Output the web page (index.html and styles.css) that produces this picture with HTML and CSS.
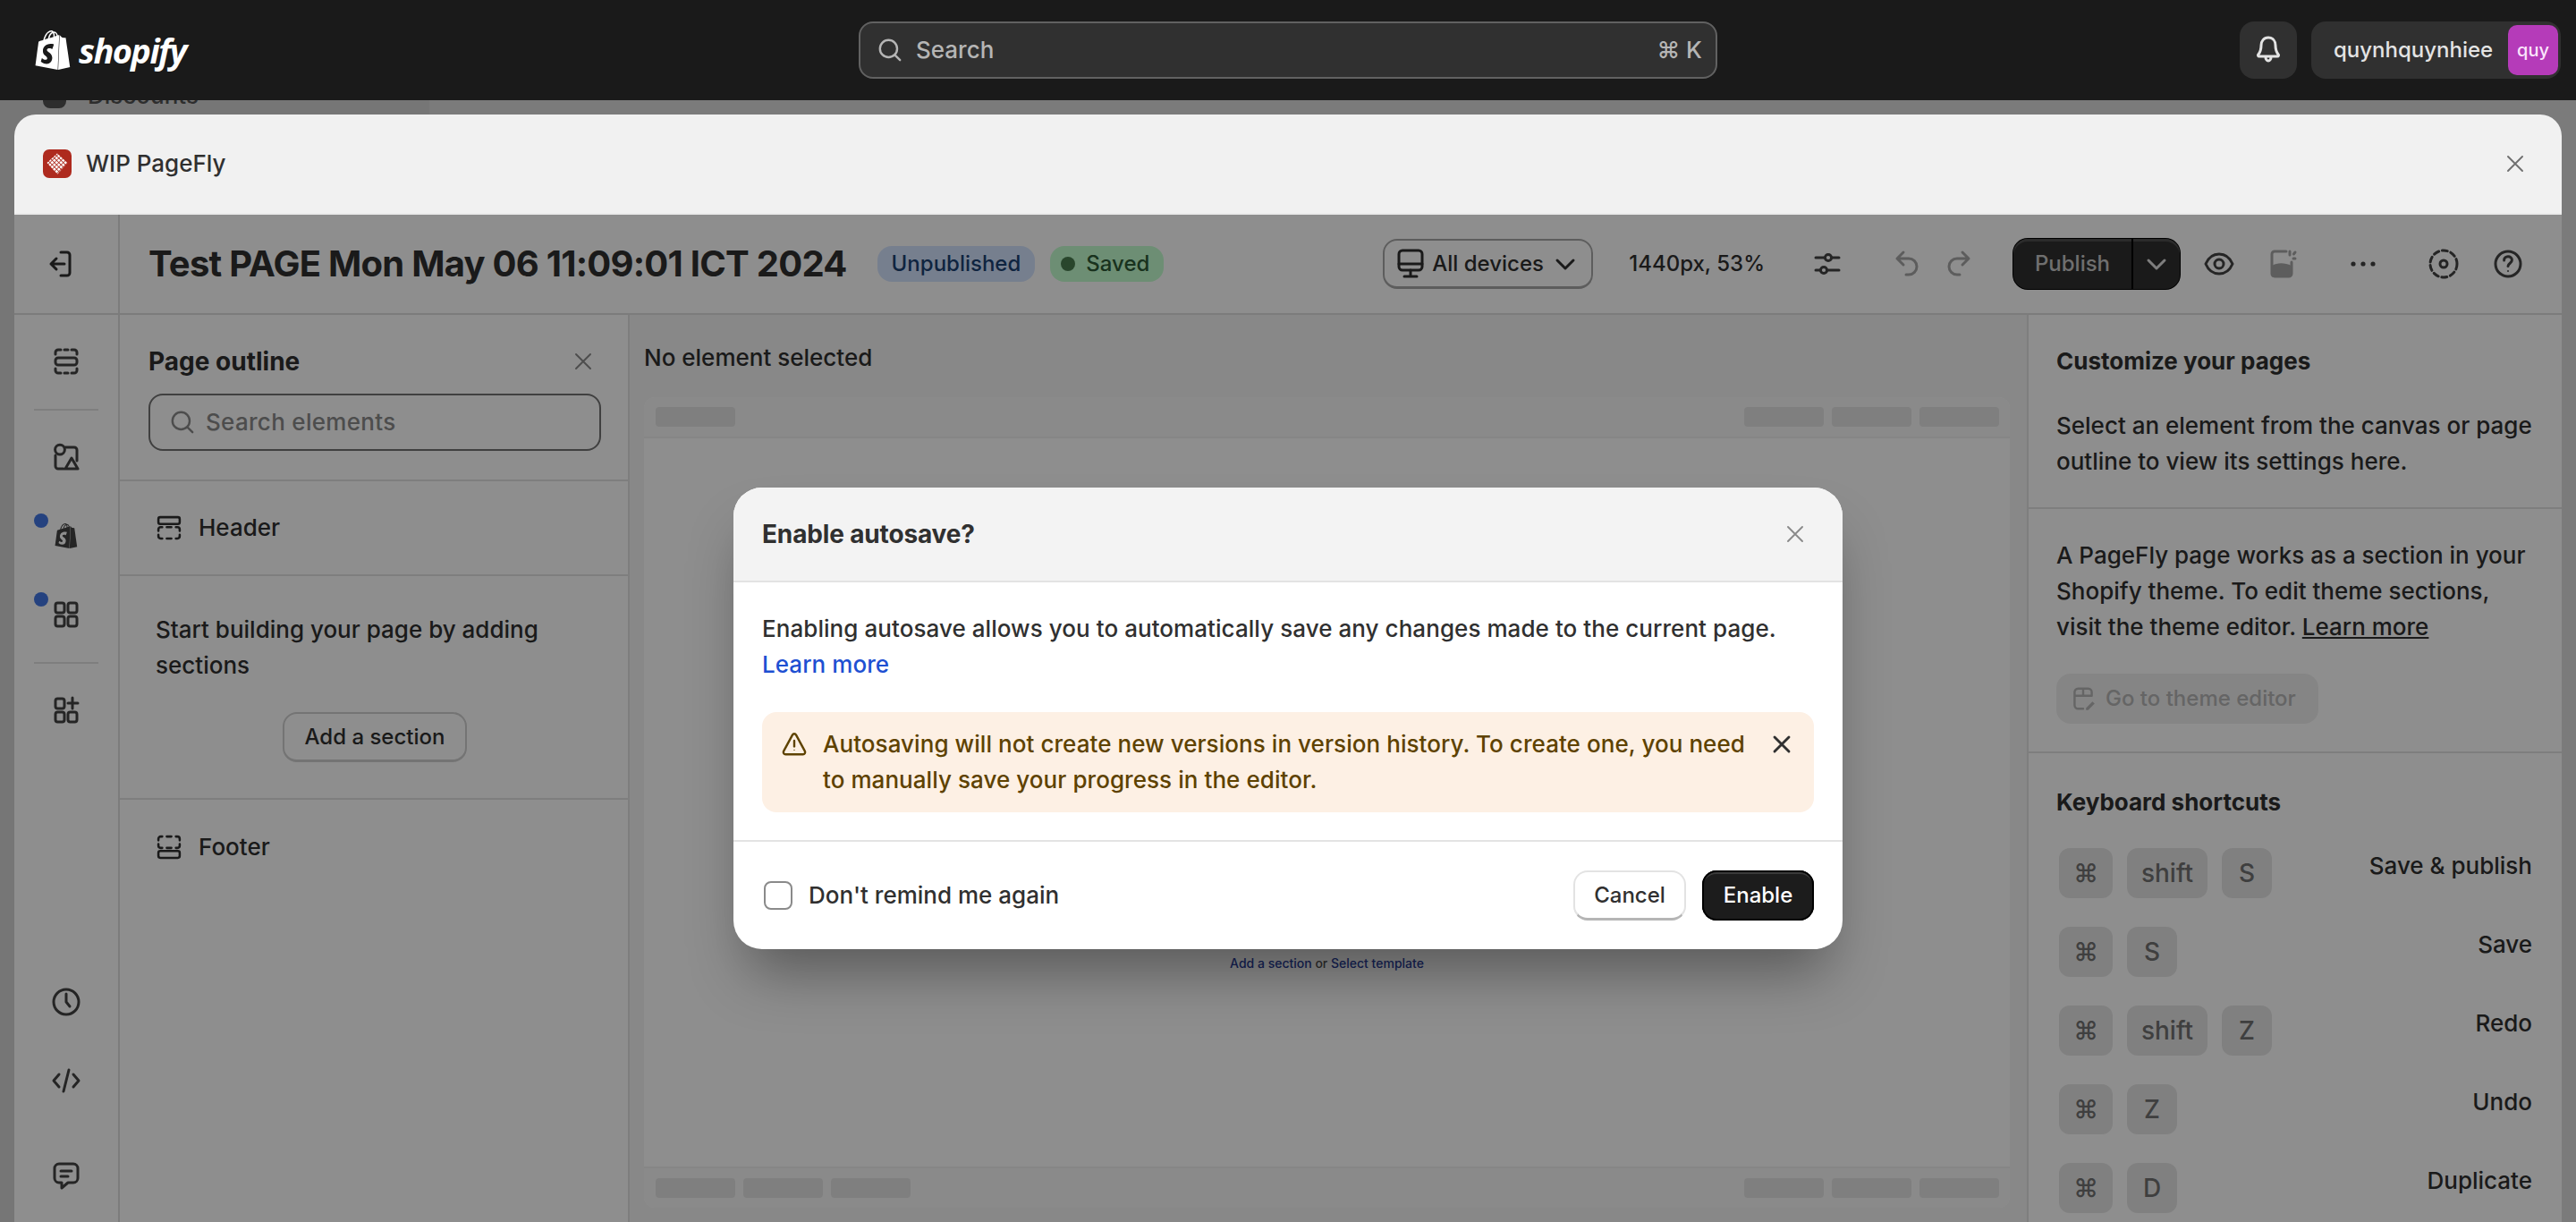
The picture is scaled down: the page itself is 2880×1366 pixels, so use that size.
FILE: index.html
```html
<!DOCTYPE html>
<html lang="en">
<head>
    <meta charset="UTF-8">
    <title>WIP PageFly</title>
    <link rel="stylesheet" href="styles.css">
</head>
<body>
    <svg class="sprite" aria-hidden="true">
        <symbol id="bag" viewBox="0 0 24 24"><path d="M15.337 23.979l7.216-1.561s-2.604-17.613-2.625-17.73c-.018-.116-.114-.192-.211-.192s-1.929-.136-1.929-.136-1.275-1.274-1.439-1.411c-.045-.037-.075-.057-.121-.074l-.914 21.104h.023zM11.71 11.305s-.81-.424-1.774-.424c-1.447 0-1.504.906-1.504 1.141 0 1.232 3.24 1.715 3.24 4.629 0 2.295-1.44 3.76-3.406 3.76-2.354 0-3.54-1.465-3.54-1.465l.646-2.086s1.245 1.066 2.28 1.066c.675 0 .975-.545.975-.932 0-1.619-2.654-1.694-2.654-4.359-.034-2.237 1.571-4.416 4.827-4.416 1.257 0 1.875.361 1.875.361l-.945 2.715-.02.01zM11.17.83c.136 0 .271.038.405.135-.984.465-2.064 1.639-2.508 3.992-.656.213-1.293.405-1.889.578C7.697 3.75 8.951.84 11.17.84V.83zm1.235 2.949v.135c-.754.232-1.583.484-2.394.736.466-1.777 1.333-2.645 2.085-2.971.193.501.309 1.176.309 2.1zm.539-2.234c.694.074 1.141.867 1.429 1.755-.349.114-.735.231-1.158.366v-.252c0-.752-.096-1.371-.271-1.871v.002zm2.992 1.289c-.02 0-.06.021-.078.021s-.289.075-.714.21c-.423-1.233-1.175-2.37-2.508-2.37h-.115C12.135.209 11.669 0 11.265 0 8.159 0 6.675 3.877 6.21 5.846c-1.194.365-2.063.636-2.16.674-.675.213-.694.232-.772.87-.075.462-1.83 14.063-1.83 14.063L15.009 24l.927-21.166z"/></symbol>
        <symbol id="close" viewBox="0 0 20 20"><path d="M5 5l10 10M15 5L5 15"/></symbol>
        <symbol id="magnifier" viewBox="0 0 20 20"><circle cx="9" cy="9" r="6"/><path d="M13.5 13.5L17 17"/></symbol>
        <symbol id="chevron" viewBox="0 0 20 20"><path d="M5.5 8l4.5 4.5L14.5 8"/></symbol>
    </svg>

    <div class="admin-behind">
        <nav class="admin-nav">
            <span class="admin-nav-icon"></span>
            <span>Discounts</span>
        </nav>
    </div>

    <header class="topbar">
        <a class="logo">
            <svg class="logo-bag"><use href="#bag"/></svg>
            <span class="logo-word">shopify</span>
        </a>
        <div class="global-search">
            <svg class="icon-32"><use href="#magnifier"/></svg>
            <span class="global-search-text">Search</span>
            <span class="global-search-keys">⌘ K</span>
        </div>
        <div class="topbar-right">
            <button class="bell-btn">
                <svg class="icon-40" viewBox="0 0 20 20"><path d="M10 3c-2.600 0-4 2-4 4.400 0 2.600-.4 3.600-1.600 5.100-.3.4-.1 1 .5 1h10.200c.6 0 .8-.6.5-1-1.200-1.500-1.600-2.500-1.600-5.100C14 5 12.600 3 10 3zM8.500 14c0 1 .6 2 1.500 2s1.500-1 1.500-2"/></svg>
            </button>
            <div class="account">
                <span class="account-name">quynhquynhiee</span>
                <span class="account-avatar">quy</span>
            </div>
        </div>
    </header>

    <main class="app-modal">
        <div class="app-title-bar">
            <svg class="app-logo" viewBox="0 0 32 32">
                <rect width="32" height="32" rx="7" fill="#ae2a1e"/>
                <defs>
                    <pattern id="pf-dots" width="3.500" height="3.500" patternUnits="userSpaceOnUse" patternTransform="rotate(45 16 15)">
                        <rect width="2.700" height="2.700" fill="#fff"/>
                    </pattern>
                </defs>
                <path d="M16 4.500l11.500 10.500L16 28 4.500 15z" fill="url(#pf-dots)"/>
            </svg>
            <span class="app-title">WIP PageFly</span>
            <svg class="close-icon app-close"><use href="#close"/></svg>
        </div>

        <div class="app-body">
            <div class="toolbar">
                <div class="toolbar-exit">
                    <svg class="icon-40" viewBox="0 0 20 20"><path d="M10 3.500h3.500a1.500 1.500 0 0 1 1.500 1.500v10a1.500 1.500 0 0 1-1.500 1.500H10M12 10H4.500M7.500 7l-3 3 3 3"/></svg>
                </div>
                <h1 class="page-name">Test PAGE Mon May 06 11:09:01 ICT 2024</h1>
                <span class="badge badge-info">Unpublished</span>
                <span class="badge badge-success"><i class="badge-dot"></i>Saved</span>

                <div class="tool-group tool-group-devices">
                    <button class="devices-btn">
                        <svg class="icon-40" viewBox="0 0 20 20"><rect x="3.500" y="2.500" width="13" height="11" rx="2"/><path d="M3.500 10h13M10 13.500v3M6.500 17h7"/></svg>
                        <span>All devices</span>
                        <svg class="icon-40"><use href="#chevron"/></svg>
                    </button>
                    <span class="viewport-size">1440px, 53%</span>
                </div>
                <div class="tool-group tool-group-50">
                    <svg class="icon-40" viewBox="0 0 20 20"><circle cx="10.500" cy="6.500" r="1.800"/><circle cx="8" cy="13.500" r="1.800"/><path d="M3.500 6.500h5M12.500 6.500h4M3.500 13.500h2.500M10 13.500h6.500"/></svg>
                </div>
                <div class="tool-group tool-group-50 tool-group-undo">
                    <svg class="icon-40 icon-muted" viewBox="0 0 20 20"><path d="M7.500 3.500L4 7l3.500 3.500M4 7h6.500a4.500 4.500 0 0 1 0 9H9"/></svg>
                    <svg class="icon-40 icon-muted" viewBox="0 0 20 20"><path d="M12.500 3.500L16 7l-3.500 3.500M16 7H9.500a4.500 4.500 0 0 0 0 9H11"/></svg>
                </div>
                <div class="publish-group">
                    <button class="publish-btn">Publish</button>
                    <button class="publish-more"><svg class="icon-40"><use href="#chevron"/></svg></button>
                </div>
                <div class="tool-group tool-group-eye">
                    <svg class="icon-40" viewBox="0 0 20 20"><path d="M2.500 10C4 6.500 6.800 4.500 10 4.500s6 2 7.500 5.500c-1.500 3.500-4.300 5.500-7.500 5.500S4 13.500 2.500 10z"/><circle cx="10" cy="10" r="2.500"/></svg>
                    <svg class="icon-40 icon-muted" viewBox="0 0 20 20"><path d="M12 3H5.500A1.500 1.500 0 0 0 4 4.500v11A1.500 1.500 0 0 0 5.500 17h8a1.500 1.500 0 0 0 1.500-1.500V9"/><path class="fill" d="M4 11c3-1.800 7-1.800 11 0v4.500a1.500 1.500 0 0 1-1.500 1.500h-8A1.500 1.500 0 0 1 4 15.500z"/><path d="M14 3v2M17 3.500l-.8 1M17 7h-1"/></svg>
                </div>
                <div class="tool-group tool-group-50">
                    <svg class="icon-40" viewBox="0 0 20 20"><circle class="fill" cx="4.500" cy="10" r="1.300"/><circle class="fill" cx="10" cy="10" r="1.300"/><circle class="fill" cx="15.500" cy="10" r="1.300"/></svg>
                </div>
                <div class="tool-group tool-group-50 tool-group-help">
                    <svg class="icon-40" viewBox="0 0 20 20"><circle cx="10" cy="10" r="7.500" stroke-dasharray="3 1.900"/><circle cx="10" cy="10" r="2"/></svg>
                    <svg class="icon-40" viewBox="0 0 20 20"><circle cx="10" cy="10" r="7"/><path d="M7.800 8c0-1.300 1-2.100 2.200-2.100s2.200.8 2.200 2c0 1.700-2.200 1.700-2.200 3.400"/><circle class="fill" cx="10" cy="14" r=".5"/></svg>
                </div>
            </div>

            <div class="workspace">
                <aside class="rail">
                    <svg class="icon-40" viewBox="0 0 20 20"><path d="M4 6V5a1.500 1.500 0 0 1 1.500-1.500H7M9 3.500h2M13 3.500h1.500A1.500 1.500 0 0 1 16 5v1M4 14v1a1.500 1.500 0 0 0 1.500 1.500H7M9 16.500h2M13 16.500h1.500A1.500 1.500 0 0 0 16 15v-1"/><rect x="4" y="8" width="12" height="4" rx="1.500"/></svg>
                    <div class="rail-line"></div>
                    <svg class="icon-40" viewBox="0 0 20 20"><circle cx="6.500" cy="5.800" r="2.700"/><path d="M9.500 4.500h5A1.500 1.500 0 0 1 16 6v6M4 9v6a1.500 1.500 0 0 0 1.500 1.500h3M9.500 16.500l3.500-6 3.500 6z"/></svg>
                    <div class="rail-item rail-item-dot">
                        <svg class="rail-bag"><use href="#bag"/></svg>
                    </div>
                    <div class="rail-item rail-item-dot">
                        <svg class="icon-40" viewBox="0 0 20 20"><rect x="4" y="3.500" width="5" height="5.500" rx="1.200"/><rect x="11" y="3.500" width="5" height="5.500" rx="1.200"/><rect x="4" y="11" width="5" height="5.500" rx="1.200"/><rect x="11" y="11" width="5" height="5.500" rx="1.200"/></svg>
                    </div>
                    <div class="rail-line"></div>
                    <svg class="icon-40" viewBox="0 0 20 20"><rect x="4" y="3.500" width="5" height="5.500" rx="1.200"/><path d="M13.500 3v6M11 6h5.500"/><rect x="4" y="11" width="5" height="5.500" rx="1.200"/><rect x="11" y="11" width="5" height="5.500" rx="1.200"/></svg>
                    <div class="rail-bottom">
                        <svg class="icon-40" viewBox="0 0 20 20"><circle cx="10" cy="10" r="7"/><path d="M10 5.500V10l2 2.500"/></svg>
                        <svg class="icon-40" viewBox="0 0 20 20"><path d="M6 6.500L3 10l3 3.500M14 6.500l3 3.500-3 3.500M11.500 4l-3 12"/></svg>
                        <svg class="icon-40" viewBox="0 0 20 20"><path d="M6 3.500h8A2.500 2.500 0 0 1 16.500 6v5.500A2.500 2.500 0 0 1 14 14h-3l-3.500 3v-3H6a2.500 2.500 0 0 1-2.500-2.500V6A2.500 2.500 0 0 1 6 3.500z"/><path d="M7 7.500h6M7 10.500h4"/></svg>
                    </div>
                </aside>

                <section class="outline">
                    <div class="outline-head">
                        <div class="outline-title-row">
                            <h2 class="panel-title">Page outline</h2>
                            <svg class="close-icon icon-grey"><use href="#close"/></svg>
                        </div>
                        <div class="outline-search">
                            <svg class="icon-32 icon-grey"><use href="#magnifier"/></svg>
                            <span>Search elements</span>
                        </div>
                    </div>
                    <div class="outline-row">
                        <svg class="icon-34" viewBox="0 0 20 20"><rect x="3" y="3" width="14" height="4.500" rx="1.200"/><path d="M3 12v-1a1.500 1.500 0 0 1 1.500-1.500h1M8.500 9.500h3M14.500 9.500h1A1.500 1.500 0 0 1 17 11v1M3 14.500v1A1.500 1.500 0 0 0 4.500 17h1M8.500 17h3M14.500 17h1a1.500 1.500 0 0 0 1.500-1.500v-1"/></svg>
                        <span>Header</span>
                    </div>
                    <div class="outline-empty">
                        <p>Start building your page by adding sections</p>
                        <button class="add-section-btn">Add a section</button>
                    </div>
                    <div class="outline-row">
                        <svg class="icon-34" viewBox="0 0 20 20"><rect x="3" y="12.500" width="14" height="4.500" rx="1.200"/><path d="M3 8v1a1.500 1.500 0 0 0 1.500 1.500h1M8.500 10.500h3M14.500 10.500h1A1.500 1.500 0 0 0 17 9V8M3 5.500v-1A1.500 1.500 0 0 1 4.500 3h1M8.500 3h3M14.500 3h1A1.500 1.500 0 0 1 17 4.500v1"/></svg>
                        <span>Footer</span>
                    </div>
                </section>

                <section class="canvas">
                    <div class="canvas-status">No element selected</div>
                    <div class="frame">
                        <div class="frame-bar frame-bar-top">
                            <div class="skeletons"><i></i></div>
                            <div class="skeletons"><i></i><i></i><i></i></div>
                        </div>
                        <div class="frame-page">
                            <p class="frame-hint"><a>Add a section</a> or <a>Select template</a></p>
                        </div>
                        <div class="frame-bar frame-bar-bottom">
                            <div class="skeletons"><i></i><i></i><i></i></div>
                            <div class="skeletons"><i></i><i></i><i></i></div>
                        </div>
                    </div>
                </section>

                <aside class="inspector">
                    <div class="inspector-block inspector-intro">
                        <h3 class="block-title">Customize your pages</h3>
                        <p>Select an element from the canvas or page outline to view its settings here.</p>
                    </div>
                    <div class="inspector-block inspector-theme">
                        <p>A PageFly page works as a section in your Shopify theme. To edit theme sections, visit the theme editor. <u>Learn more</u></p>
                        <button class="theme-btn">
                            <svg class="icon-32" viewBox="0 0 20 20"><path d="M16 8V5.500A2.500 2.500 0 0 0 13.500 3h-7A2.500 2.500 0 0 0 4 5.500v9A2.500 2.500 0 0 0 6.500 17H10M4 8h12M10 3v5"/><path class="fill" d="M12 16.500l4.500-4.500 1.500 1.500-4.500 4.500H12z"/></svg>
                            <span>Go to theme editor</span>
                        </button>
                    </div>
                    <div class="inspector-block inspector-shortcuts">
                        <h3 class="block-title shortcuts-title">Keyboard shortcuts</h3>
                        <div class="shortcut">
                            <div class="keys"><kbd class="key-cmd">⌘</kbd><kbd class="key-shift">shift</kbd><kbd>S</kbd></div>
                            <span class="shortcut-name">Save &amp; publish</span>
                        </div>
                        <div class="shortcut">
                            <div class="keys"><kbd class="key-cmd">⌘</kbd><kbd>S</kbd></div>
                            <span class="shortcut-name">Save</span>
                        </div>
                        <div class="shortcut">
                            <div class="keys"><kbd class="key-cmd">⌘</kbd><kbd class="key-shift">shift</kbd><kbd>Z</kbd></div>
                            <span class="shortcut-name">Redo</span>
                        </div>
                        <div class="shortcut">
                            <div class="keys"><kbd class="key-cmd">⌘</kbd><kbd>Z</kbd></div>
                            <span class="shortcut-name">Undo</span>
                        </div>
                        <div class="shortcut">
                            <div class="keys"><kbd class="key-cmd">⌘</kbd><kbd>D</kbd></div>
                            <span class="shortcut-name">Duplicate</span>
                        </div>
                    </div>
                </aside>
            </div>

            <div class="scrim">
                <div class="dialog">
                    <div class="dialog-head">
                        <h2 class="dialog-title">Enable autosave?</h2>
                        <svg class="close-icon icon-grey"><use href="#close"/></svg>
                    </div>
                    <div class="dialog-body">
                        <p>Enabling autosave allows you to automatically save any changes made to the current page. <a class="link">Learn more</a></p>
                        <div class="warning">
                            <svg class="warning-icon" viewBox="0 0 20 20"><path d="M8.700 3.500L2.600 14.800c-.6 1 .2 2.200 1.300 2.200h12.200c1.100 0 1.900-1.200 1.300-2.200L11.300 3.500c-.6-1.100-2-1.100-2.600 0z"/><path d="M10 7.500v4"/><circle class="fill" cx="10" cy="14" r=".4"/></svg>
                            <p>Autosaving will not create new versions in version history. To create one, you need to manually save your progress in the editor.</p>
                            <svg class="warning-close"><use href="#close"/></svg>
                        </div>
                    </div>
                    <div class="dialog-foot">
                        <label class="remind">
                            <span class="checkbox"></span>
                            <span>Don't remind me again</span>
                        </label>
                        <div class="dialog-actions">
                            <button class="btn-cancel">Cancel</button>
                            <button class="btn-enable">Enable</button>
                        </div>
                    </div>
                </div>
            </div>
        </div>
    </main>
</body>
</html>
```

FILE: styles.css
```css
* {
    box-sizing: border-box;
}

html, body {
    height: 100%;
}

body {
    margin: 0;
    position: relative;
    overflow: hidden;
    background: #7b7b7b;
    color: #303030;
    font-family: Inter, "DejaVu Sans", sans-serif;
    font-size: 26px;
    line-height: 40px;
    font-weight: 450;
}

h1, h2, h3, p {
    margin: 0;
}

button {
    font: inherit;
    color: inherit;
    padding: 0;
    border: none;
    background: none;
}

svg {
    flex: none;
    display: block;
    fill: none;
    stroke: currentColor;
    stroke-width: 1.5;
    stroke-linecap: round;
    stroke-linejoin: round;
}

svg .fill {
    fill: currentColor;
    stroke: none;
}

.sprite {
    display: none;
}

.icon-32 { width: 32px; height: 32px; }
.icon-34 { width: 34px; height: 34px; }
.icon-40 { width: 40px; height: 40px; color: #444; }
.icon-muted { color: #a8a8a8; }
.icon-grey { color: #8a8a8a; }

.close-icon {
    width: 32px;
    height: 32px;
    stroke-width: 1.2;
}

/* admin page behind the app modal */
.admin-behind {
    position: absolute;
    inset: 0;
}

.admin-nav {
    width: 480px;
    height: 100%;
    padding: 87px 0 0 48px;
    display: flex;
    gap: 24px;
    background: #767676;
    color: #2e2e2e;
}

.admin-nav-icon {
    width: 26px;
    height: 34px;
    border-radius: 8px;
    background: #2e2e2e;
}

/* top bar */
.topbar {
    position: relative;
    height: 112px;
    padding: 0 17px;
    display: grid;
    grid-template-columns: 1fr 960px 1fr;
    align-items: center;
    background: #1a1a1a;
    color: #e3e3e3;
}

.logo {
    margin-left: 20px;
    display: flex;
    align-items: center;
    gap: 7px;
    color: #fff;
}

.logo-bag {
    width: 44px;
    height: 48px;
    fill: #fff;
    stroke: none;
}

.logo-word {
    font-family: "Open Sans", sans-serif;
    font-size: 38px;
    font-style: italic;
    font-weight: 700;
    letter-spacing: -1.6px;
    line-height: 48px;
}

.global-search {
    height: 64px;
    padding: 0 15px 0 17px;
    display: flex;
    align-items: center;
    gap: 13px;
    border: 2px solid #616161;
    border-radius: 16px;
    background: #303030;
    color: #b5b5b5;
}

.global-search-keys {
    margin-left: auto;
}

.topbar-right {
    display: flex;
    justify-content: flex-end;
    gap: 16px;
}

.bell-btn {
    width: 64px;
    height: 64px;
    display: flex;
    align-items: center;
    justify-content: center;
    border-radius: 16px;
    background: #303030;
}

.bell-btn .icon-40 {
    color: #e3e3e3;
}

.account {
    width: 279px;
    height: 64px;
    padding: 4px 3px 4px 25px;
    display: flex;
    align-items: center;
    justify-content: space-between;
    border-radius: 16px;
    background: #303030;
    font-size: 24px;
    font-weight: 500;
}

.account-avatar {
    width: 56px;
    height: 56px;
    display: flex;
    align-items: center;
    justify-content: center;
    border-radius: 10px;
    background: #b53bb9;
    color: #fbe5fc;
    font-size: 20px;
}

/* app modal */
.app-modal {
    position: relative;
    height: calc(100% - 128px);
    margin: 16px 16px 0;
    display: flex;
    flex-direction: column;
    border-radius: 24px 24px 0 0;
    overflow: hidden;
}

.app-title-bar {
    height: 112px;
    flex: none;
    padding: 0 36px 0 32px;
    display: flex;
    align-items: center;
    gap: 16px;
    background: #f1f1f1;
    border-bottom: 2px solid #ebebeb;
    font-weight: 550;
}

.app-logo {
    width: 32px;
    height: 32px;
    stroke: none;
}

.app-close {
    margin-left: auto;
    color: #707070;
}

.app-body {
    position: relative;
    flex: 1;
    min-height: 0;
    display: flex;
    flex-direction: column;
    background: #fff;
}

.toolbar {
    height: 112px;
    flex: none;
    padding-right: 40px;
    display: flex;
    align-items: center;
    border-bottom: 2px solid #dedede;
}

.toolbar-exit {
    width: 118px;
    height: 100%;
    padding-left: 32px;
    display: flex;
    align-items: center;
    border-right: 2px solid #dedede;
}

.toolbar-exit .icon-40 {
    color: #303030;
}

.page-name {
    margin-left: 32px;
    margin-right: 34px;
    font-size: 40px;
    line-height: 56px;
    font-weight: 700;
    letter-spacing: -0.75px;
    white-space: nowrap;
}

.badge {
    height: 40px;
    padding: 0 16px;
    display: flex;
    align-items: center;
    border-radius: 16px;
    font-size: 24px;
    font-weight: 500;
}

.badge-info {
    background: #d5e5ff;
    color: #1c4274;
}

.badge-success {
    margin-left: 17px;
    padding-left: 12px;
    background: #c4ffd1;
    color: #2e5a36;
}

.badge-dot {
    width: 16px;
    height: 16px;
    margin-right: 12px;
    border-radius: 50%;
    background: #4a7f50;
}

.tool-group {
    display: flex;
    align-items: center;
}

.tool-group-devices {
    margin-left: auto;
    gap: 40px;
    font-size: 24px;
}

.tool-group-50 {
    margin-left: 50px;
}

.tool-group-undo {
    gap: 16px;
}

.tool-group-eye {
    margin-left: 24px;
    gap: 31px;
}

.tool-group-help {
    gap: 32px;
}

.devices-btn {
    width: 235px;
    height: 56px;
    padding: 0 0 0 9px;
    display: flex;
    align-items: center;
    gap: 4px;
    border: 2px solid #a8a8a8;
    border-bottom-width: 3px;
    border-radius: 16px;
    font-weight: 500;
    white-space: nowrap;
}

.devices-btn .icon-40 {
    color: #303030;
}

.publish-group {
    width: 186px;
    height: 56px;
    margin-left: 42px;
    display: flex;
    border-radius: 16px;
    background: #303030;
    box-shadow: 0 0 0 1px #000, inset 0 3px 0 #4d4d4d;
    color: #e3e3e3;
    font-size: 24px;
    font-weight: 500;
}

.publish-btn {
    flex: 1;
    color: #c8c8c8;
}

.publish-more {
    width: 54px;
    display: flex;
    align-items: center;
    justify-content: center;
    border-left: 2px solid #000;
}

.publish-more .icon-40 {
    color: #e3e3e3;
}

.workspace {
    flex: 1;
    min-height: 0;
    display: flex;
}

/* left rail */
.rail {
    width: 118px;
    flex: none;
    padding: 32px 0 32px;
    display: flex;
    flex-direction: column;
    align-items: center;
    border-right: 2px solid #dedede;
}

.rail-line {
    width: 72px;
    height: 2px;
    margin: 33px 0 32px;
    background: #e3e3e3;
}

.rail-item {
    position: relative;
    margin-top: 48px;
}

.rail-item-dot::before {
    content: "";
    position: absolute;
    left: -16px;
    top: -5px;
    width: 16px;
    height: 16px;
    border-radius: 50%;
    background: #4377e4;
}

.rail-bag {
    width: 40px;
    height: 40px;
    padding: 6px;
    fill: #444;
    stroke: none;
}

.rail-bottom {
    margin-top: auto;
    display: flex;
    flex-direction: column;
    gap: 48px;
}

.rail-bottom .icon-40:nth-child(3) {
    margin-top: 18px;
}

/* page outline */
.outline {
    width: 570px;
    flex: none;
    border-right: 2px solid #e3e3e3;
}

.outline-head {
    height: 186px;
    padding: 32px 30px 0 32px;
    border-bottom: 2px solid #e3e3e3;
}

.outline-title-row {
    margin-bottom: 16px;
    padding-right: 4px;
    display: flex;
    align-items: center;
    justify-content: space-between;
}

.panel-title {
    font-size: 28px;
    font-weight: 650;
}

.outline-search {
    height: 64px;
    padding: 0 24px 0 20px;
    display: flex;
    align-items: center;
    gap: 10px;
    border: 2px solid #737373;
    border-radius: 16px;
    color: #8a8a8a;
    letter-spacing: 0.3px;
}

.outline-row {
    height: 106px;
    padding: 0 38px;
    display: flex;
    align-items: center;
    gap: 16px;
    border-bottom: 2px solid #e3e3e3;
}

.outline-row:last-child {
    border-bottom: none;
}

.outline-empty {
    padding: 40px 38px 40px 40px;
    display: flex;
    flex-direction: column;
    align-items: center;
    gap: 32px;
    border-bottom: 2px solid #e3e3e3;
}

.add-section-btn {
    width: 206px;
    height: 56px;
    border: 2px solid #d0d0d0;
    border-bottom-width: 3px;
    border-radius: 16px;
    font-size: 24px;
    font-weight: 500;
}

/* canvas */
.canvas {
    flex: 1;
    min-width: 0;
    padding: 0 19px 0 16px;
    display: flex;
    flex-direction: column;
    background: #f4f4f4;
}

.canvas-status {
    height: 92px;
    padding-top: 28px;
    font-weight: 500;
}

.frame {
    height: 906px;
    display: flex;
    flex-direction: column;
    border-radius: 12px;
    background: #fff;
    overflow: hidden;
}

.frame-bar {
    height: 46px;
    flex: none;
    padding: 11px 12px 0 13px;
    display: flex;
    justify-content: space-between;
    background: #f8f8f8;
}

.frame-bar-top {
    border-bottom: 2px solid #f0f0f0;
}

.frame-bar-bottom {
    border-top: 2px solid #f0f0f0;
}

.skeletons {
    display: flex;
    gap: 9px;
}

.skeletons i {
    width: 89px;
    height: 22px;
    border-radius: 4px;
    background: #e4e4e4;
}

.frame-page {
    flex: 1;
    padding-top: 578px;
    text-align: center;
    font-size: 14px;
    line-height: 18px;
    color: #555;
}

.frame-hint a {
    color: #2a3f9e;
}

/* right panel */
.inspector {
    width: 598px;
    flex: none;
    border-left: 2px solid #e3e3e3;
}

.inspector-block {
    padding: 32px 33px 0 31px;
}

.inspector-intro {
    height: 217px;
    border-bottom: 2px solid #e3e3e3;
}

.inspector-theme {
    height: 273px;
    border-bottom: 2px solid #e3e3e3;
}

.inspector-shortcuts {
    padding-top: 35px;
}

.block-title {
    margin-bottom: 32px;
    font-size: 26px;
    font-weight: 650;
}

.shortcuts-title {
    margin-bottom: 31px;
}

.theme-btn {
    width: 293px;
    height: 56px;
    margin-top: 32px;
    padding-left: 14px;
    display: flex;
    align-items: center;
    gap: 9px;
    border-radius: 16px;
    background: #efefef;
    color: #b5b5b5;
    font-size: 24px;
}

.shortcut {
    height: 88px;
    display: flex;
    justify-content: space-between;
    padding-left: 3px;
}

.keys {
    display: flex;
    gap: 16px;
}

.keys kbd {
    width: 56px;
    height: 56px;
    display: flex;
    align-items: center;
    justify-content: center;
    border-radius: 12px;
    background: #e6e6e6;
    color: #717171;
    font-family: inherit;
    font-size: 28px;
}

.keys .key-cmd {
    width: 60px;
}

.keys .key-shift {
    width: 90px;
}

.shortcut-name {
    height: 40px;
}

/* autosave dialog */
.scrim {
    position: absolute;
    inset: 0;
    display: flex;
    align-items: center;
    justify-content: center;
    background: rgba(0, 0, 0, 0.443);
}

.dialog {
    width: 1240px;
    height: 516px;
    display: flex;
    flex-direction: column;
    border-radius: 32px;
    background: #fff;
    box-shadow: 0 40px 64px -16px rgba(0, 0, 0, 0.38);
    overflow: hidden;
}

.dialog-head {
    height: 106px;
    flex: none;
    padding: 0 37px 0 32px;
    display: flex;
    align-items: center;
    justify-content: space-between;
    background: #f3f3f3;
    border-bottom: 2px solid #e3e3e3;
}

.dialog-title {
    font-size: 28px;
    font-weight: 650;
    letter-spacing: -0.15px;
}

.dialog-body {
    height: 290px;
    flex: none;
    padding: 32px 32px 0;
    border-bottom: 2px solid #e3e3e3;
    letter-spacing: 0.06px;
}

.link {
    display: block;
    color: #1e50d2;
}

.warning {
    height: 112px;
    margin-top: 33px;
    padding: 16px 20px 16px 20px;
    display: flex;
    gap: 16px;
    border-radius: 16px;
    background: #fdf0e4;
    color: #5e4200;
}

.warning p {
    flex: 1;
}

.warning-icon {
    width: 32px;
    height: 32px;
    margin-top: 4px;
}

.warning-close {
    width: 32px;
    height: 32px;
    margin-top: 4px;
    color: #303030;
    stroke-width: 1.8;
}

.dialog-foot {
    flex: 1;
    padding: 0 32px 0 34px;
    display: flex;
    align-items: center;
    justify-content: space-between;
}

.remind {
    display: flex;
    align-items: center;
    gap: 18px;
}

.checkbox {
    width: 32px;
    height: 32px;
    border: 2px solid #8a8a8a;
    border-radius: 8px;
}

.dialog-actions {
    display: flex;
    gap: 18px;
}

.btn-cancel, .btn-enable {
    width: 126px;
    height: 56px;
    border-radius: 16px;
    font-size: 24px;
    font-weight: 550;
}

.btn-cancel {
    border: 2px solid #e3e3e3;
    border-bottom: 3px solid #b5b5b5;
    background: #fff;
}

.btn-enable {
    width: 125px;
    background: #1c1c1c;
    box-shadow: inset 0 0 0 2px #000, inset 0 4px 0 #3a3a3a;
    color: #fff;
}
```
